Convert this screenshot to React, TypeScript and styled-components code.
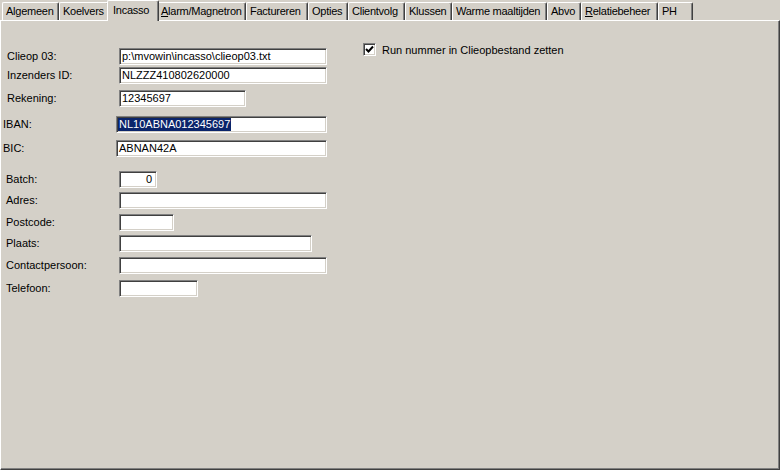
import styled, { createGlobalStyle } from 'styled-components';

const GlobalStyle = createGlobalStyle`
    html, body {
        margin: 0;
        padding: 0;
        background: #d4d0c8;
    }
    * {
        box-sizing: border-box;
    }
`;

const Window = styled.div`
    width: 780px;
    height: 470px;
    background: #d4d0c8;
    font-family: 'Liberation Sans', Arial, sans-serif;
    font-size: 11px;
    color: #000;
    overflow: hidden;
`;

const TabStrip = styled.div`
    display: flex;
    align-items: flex-start;
    height: 20px;
    padding-left: 2px;
    position: relative;
    z-index: 1;
`;

const Tab = styled.div<{ $width: number; $active?: boolean }>`
    width: ${(p) => (p.$active ? p.$width + 4 : p.$width)}px;
    height: ${(p) => (p.$active ? 21 : 18)}px;
    margin: ${(p) => (p.$active ? '0 -2px' : '2px 0 0')};
    padding-left: ${(p) => (p.$active ? 5 : 3)}px;
    line-height: ${(p) => (p.$active ? 19 : 16)}px;
    letter-spacing: -0.25px;
    background: #d4d0c8;
    border-top: 1px solid #fff;
    border-left: 1px solid #fff;
    border-right: 1px solid #404040;
    border-radius: 2px 2px 0 0;
    box-shadow: inset -1px 0 #808080;
    white-space: nowrap;
    overflow: hidden;
    position: relative;
    z-index: ${(p) => (p.$active ? 2 : 1)};

    u {
        text-decoration: underline;
        text-underline-offset: 1px;
    }
`;

const Panel = styled.div`
    height: 450px;
    border: 1px solid;
    border-color: #fff #404040 #404040 #fff;
    box-shadow: inset -1px -1px #808080;
    display: flex;
`;

const FormColumn = styled.div`
    width: 362px;
    display: flex;
    flex-direction: column;
`;

const Row = styled.div<{ $top: number }>`
    display: flex;
    align-items: center;
    height: 17px;
    margin-top: ${(p) => p.$top}px;
`;

const Label = styled.div<{ $indent: number; $fieldX: number }>`
    width: ${(p) => p.$fieldX - 1}px;
    padding-left: ${(p) => p.$indent - 1}px;
    margin-top: -1px;
    white-space: nowrap;
`;

const Field = styled.div<{ $width: number; $right?: boolean }>`
    width: ${(p) => p.$width}px;
    height: 17px;
    background: #fff;
    border: 1px solid;
    border-color: #808080 #fff #fff #808080;
    box-shadow: inset 1px 1px #404040, inset -1px -1px #d4d0c8;
    padding: 0 ${(p) => (p.$right ? 4 : 0)}px 0 2px;
    line-height: 15px;
    text-align: ${(p) => (p.$right ? 'right' : 'left')};
    white-space: nowrap;
    overflow: hidden;
`;

const Selected = styled.span`
    display: inline-block;
    height: 13px;
    line-height: 13px;
    margin-left: -1px;
    padding: 0 1px;
    background: #0a246a;
    color: #fff;
`;

const CheckColumn = styled.div`
    padding-top: 22px;
`;

const CheckRow = styled.label`
    display: flex;
    align-items: center;
    gap: 6px;
    height: 13px;
    white-space: nowrap;
`;

const CheckBox = styled.span`
    display: flex;
    align-items: center;
    justify-content: center;
    width: 13px;
    height: 13px;
    background: #fff;
    border: 1px solid;
    border-color: #808080 #fff #fff #808080;
    box-shadow: inset 1px 1px #404040, inset -1px -1px #d4d0c8;
`;

const tabs = [
    { name: 'Algemeen', width: 57 },
    { name: 'Koelvers', width: 50 },
    { name: 'Incasso', width: 48, active: true },
    { name: 'Alarm/Magnetron', width: 89, key: 'A' },
    { name: 'Factureren', width: 62 },
    { name: 'Opties', width: 40 },
    { name: 'Clientvolg', width: 57 },
    { name: 'Klussen', width: 47 },
    { name: 'Warme maaltijden', width: 95 },
    { name: 'Abvo', width: 34 },
    { name: 'Relatiebeheer', width: 77, key: 'R' },
    { name: 'PH', width: 35 },
];

const rows = [
    { label: 'Clieop 03:', indent: 7, fieldX: 119, width: 208, top: 27, value: 'p:\\mvowin\\incasso\\clieop03.txt' },
    { label: 'Inzenders ID:', indent: 7, fieldX: 119, width: 208, top: 2, value: 'NLZZZ410802620000' },
    { label: 'Rekening:', indent: 7, fieldX: 119, width: 127, top: 6, value: '12345697' },
    { label: 'IBAN:', indent: 3, fieldX: 116, width: 211, top: 9, value: 'NL10ABNA012345697', selected: true },
    { label: 'BIC:', indent: 3, fieldX: 116, width: 211, top: 7, value: 'ABNAN42A' },
    { label: 'Batch:', indent: 6, fieldX: 119, width: 38, top: 14, value: '0', right: true },
    { label: 'Adres:', indent: 6, fieldX: 119, width: 208, top: 4, value: '' },
    { label: 'Postcode:', indent: 6, fieldX: 119, width: 55, top: 5, value: '' },
    { label: 'Plaats:', indent: 6, fieldX: 119, width: 193, top: 4, value: '' },
    { label: 'Contactpersoon:', indent: 6, fieldX: 119, width: 208, top: 5, value: '' },
    { label: 'Telefoon:', indent: 6, fieldX: 119, width: 79, top: 6, value: '' },
];

const TabLabel = ({ name, hotkey }: { name: string; hotkey?: string }) =>
    hotkey ? (
        <>
            <u>{name.slice(0, 1)}</u>
            {name.slice(1)}
        </>
    ) : (
        <>{name}</>
    );

export default function App() {
    return (
        <Window>
            <GlobalStyle />
            <TabStrip>
                {tabs.map((tab) => (
                    <Tab key={tab.name} $width={tab.width} $active={tab.active}>
                        <TabLabel name={tab.name} hotkey={tab.key} />
                    </Tab>
                ))}
            </TabStrip>
            <Panel>
                <FormColumn>
                    {rows.map((row) => (
                        <Row key={row.label} $top={row.top}>
                            <Label $indent={row.indent} $fieldX={row.fieldX}>
                                {row.label}
                            </Label>
                            <Field $width={row.width} $right={row.right}>
                                {row.selected ? <Selected>{row.value}</Selected> : row.value}
                            </Field>
                        </Row>
                    ))}
                </FormColumn>
                <CheckColumn>
                    <CheckRow>
                        <CheckBox>
                            <svg width="9" height="9" viewBox="0 0 9 9">
                                <path d="M1 4 L3.5 6.5 L8 1.5" fill="none" stroke="#000" strokeWidth="2" />
                            </svg>
                        </CheckBox>
                        Run nummer in Clieopbestand zetten
                    </CheckRow>
                </CheckColumn>
            </Panel>
        </Window>
    );
}
